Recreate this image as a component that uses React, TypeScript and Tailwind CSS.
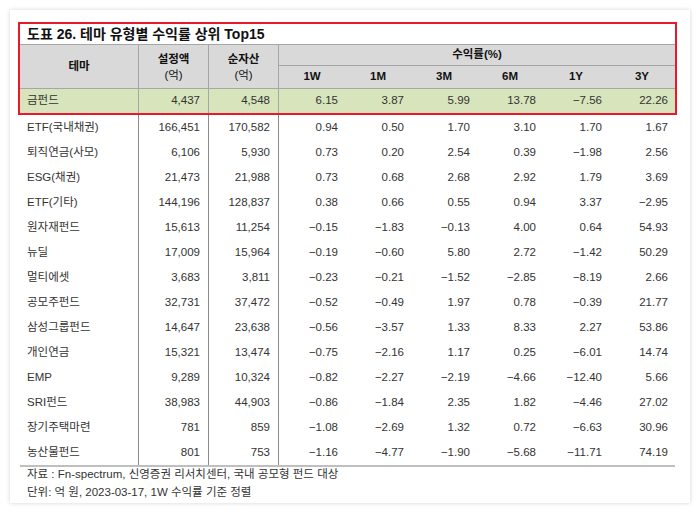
import React from "react";

type Row = {
  name: string;
  set: string;
  net: string;
  r: string[];
};

const rows: Row[] = [
  { name: "ETF(국내채권)", set: "166,451", net: "170,582", r: ["0.94", "0.50", "1.70", "3.10", "1.70", "1.67"] },
  { name: "퇴직연금(사모)", set: "6,106", net: "5,930", r: ["0.73", "0.20", "2.54", "0.39", "−1.98", "2.56"] },
  { name: "ESG(채권)", set: "21,473", net: "21,988", r: ["0.73", "0.68", "2.68", "2.92", "1.79", "3.69"] },
  { name: "ETF(기타)", set: "144,196", net: "128,837", r: ["0.38", "0.66", "0.55", "0.94", "3.37", "−2.95"] },
  { name: "원자재펀드", set: "15,613", net: "11,254", r: ["−0.15", "−1.83", "−0.13", "4.00", "0.64", "54.93"] },
  { name: "뉴딜", set: "17,009", net: "15,964", r: ["−0.19", "−0.60", "5.80", "2.72", "−1.42", "50.29"] },
  { name: "멀티에셋", set: "3,683", net: "3,811", r: ["−0.23", "−0.21", "−1.52", "−2.85", "−8.19", "2.66"] },
  { name: "공모주펀드", set: "32,731", net: "37,472", r: ["−0.52", "−0.49", "1.97", "0.78", "−0.39", "21.77"] },
  { name: "삼성그룹펀드", set: "14,647", net: "23,638", r: ["−0.56", "−3.57", "1.33", "8.33", "2.27", "53.86"] },
  { name: "개인연금", set: "15,321", net: "13,474", r: ["−0.75", "−2.16", "1.17", "0.25", "−6.01", "14.74"] },
  { name: "EMP", set: "9,289", net: "10,324", r: ["−0.82", "−2.27", "−2.19", "−4.66", "−12.40", "5.66"] },
  { name: "SRI펀드", set: "38,983", net: "44,903", r: ["−0.86", "−1.84", "2.35", "1.82", "−4.46", "27.02"] },
  { name: "장기주택마련", set: "781", net: "859", r: ["−1.08", "−2.69", "1.32", "0.72", "−6.63", "30.96"] },
  { name: "농산물펀드", set: "801", net: "753", r: ["−1.16", "−4.77", "−1.90", "−5.68", "−11.71", "74.19"] },
];

const periods = ["1W", "1M", "3M", "6M", "1Y", "3Y"];
const cols = "grid grid-cols-[119px_70px_70px_66px_66px_66px_66px_66px_66px]";
const font = { fontFamily: '"Liberation Sans", "Noto Sans CJK KR", sans-serif' };

function DataRow({ row, green }: { row: Row; green?: boolean }) {
  const line = green ? "border-r border-[#a6a6a6]" : "border-r border-[#8c8c8c]";
  return (
    <div className={`${cols} ${green ? "h-[24px] bg-[#d8e4bc]" : "h-[25px]"} text-[11.5px] text-[#333]`}>
      <div className={`flex items-center pl-[7px] ${line}`}>{row.name}</div>
      <div className={`flex items-center justify-end pr-[8px] ${line}`}>{row.set}</div>
      <div className={`flex items-center justify-end pr-[8px] ${line}`}>{row.net}</div>
      {row.r.map((v, i) => (
        <div key={i} className="flex items-center justify-end pr-[7px]">
          {v}
        </div>
      ))}
    </div>
  );
}

export default function App() {
  return (
    <div className="min-h-screen bg-white p-[10px]" style={font}>
      <div className="w-[680px] h-[493px] bg-white shadow-[0_0_4px_rgba(0,0,0,0.18)] pl-[8px] pt-[12px]">
        <div className="w-[659px] border-2 border-[#e8192c]">
          <div className="h-[20px] flex items-center pl-[7px] text-[14px] font-semibold text-[#111]">
            도표 26. 테마 유형별 수익률 상위 Top15
          </div>
          <div className={`${cols} grid-rows-[21px_22px] bg-[#d9d9d9] border-y border-[#a6a6a6] text-[11.5px] font-bold text-[#111]`}>
            <div className="row-span-2 flex items-center justify-center border-r border-[#a6a6a6]">테마</div>
            <div className="row-span-2 flex flex-col items-center justify-center leading-[16px] border-r border-[#a6a6a6]">
              <span>설정액</span>
              <span className="font-normal">(억)</span>
            </div>
            <div className="row-span-2 flex flex-col items-center justify-center leading-[16px] border-r border-[#a6a6a6]">
              <span>순자산</span>
              <span className="font-normal">(억)</span>
            </div>
            <div className="col-span-6 flex items-center justify-center border-b border-[#a6a6a6]">수익률(%)</div>
            {periods.map((p) => (
              <div key={p} className="flex items-center justify-center">
                {p}
              </div>
            ))}
          </div>
          <DataRow
            green
            row={{ name: "금펀드", set: "4,437", net: "4,548", r: ["6.15", "3.87", "5.99", "13.78", "−7.56", "22.26"] }}
          />
        </div>
        <div className="ml-[2px] w-[655px] border-b-2 border-[#bfbfbf]">
          {rows.map((row) => (
            <DataRow key={row.name} row={row} />
          ))}
        </div>
        <div className="pl-[9px] -mt-[2px] text-[11.5px] leading-[18px] text-[#333]">
          <div>자료 : Fn-spectrum, 신영증권 리서치센터, 국내 공모형 펀드 대상</div>
          <div>단위: 억 원, 2023-03-17, 1W 수익률 기준 정렬</div>
        </div>
      </div>
    </div>
  );
}
